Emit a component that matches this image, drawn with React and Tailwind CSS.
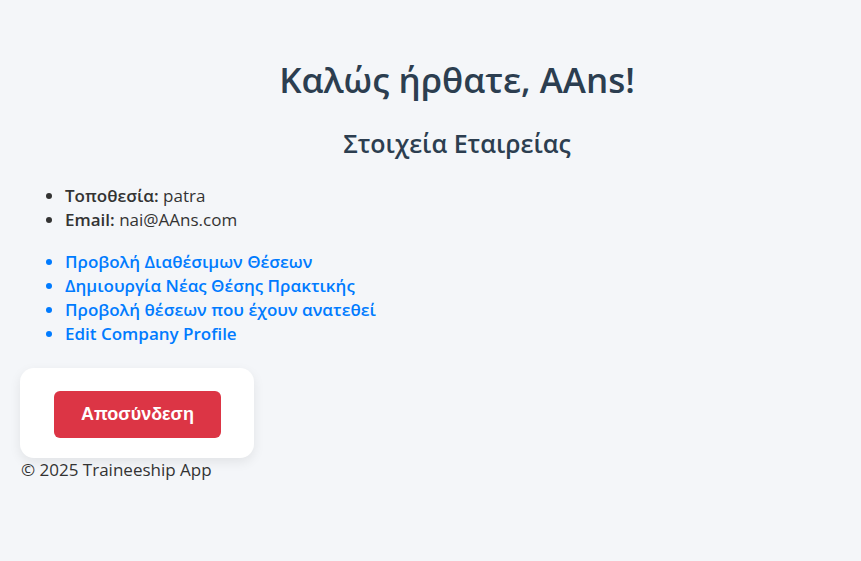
export default function App() {
  return (
    <div className="min-h-[561px] bg-[#f4f6f9] px-5 pt-[55px] text-[#333] font-['Open_Sans',sans-serif] text-[17px]">
      <h1 className="pl-[53px] text-center text-[35px] leading-[50px] font-semibold text-[#2c3e50]">
        Καλώς ήρθατε, AAns!
      </h1>
      <h2 className="mt-[20px] pl-[53px] text-center text-[25px] leading-[36px] font-semibold text-[#2c3e50]">
        Στοιχεία Εταιρείας
      </h2>
      <ul className="mt-[23px] list-disc pl-[45px] leading-[24px]">
        <li>
          <strong className="font-semibold">Τοποθεσία:</strong> patra
        </li>
        <li>
          <strong className="font-semibold">Email:</strong> nai@AAns.com
        </li>
      </ul>
      <ul className="mt-[18px] list-disc pl-[45px] leading-[24px] font-semibold text-[#007bff]">
        <li>
          <a href="#">Προβολή Διαθέσιμων Θέσεων</a>
        </li>
        <li>
          <a href="#">Δημιουργία Νέας Θέσης Πρακτικής</a>
        </li>
        <li>
          <a href="#">Προβολή θέσεων που έχουν ανατεθεί</a>
        </li>
        <li>
          <a href="#">Edit Company Profile</a>
        </li>
      </ul>
      <div className="mt-[22px] w-[234px] rounded-[14px] bg-white px-[34px] pt-[23px] pb-[20px] shadow-[0_4px_12px_rgba(0,0,0,0.08)]">
        <button className="h-[47px] w-[167px] rounded-[6px] bg-[#dc3545] text-[18px] font-bold text-white font-['Liberation_Sans',sans-serif]">
          Αποσύνδεση
        </button>
      </div>
      <footer className="pl-[1px] text-[17px] leading-[24px] text-[#333]">
        © 2025 Traineeship App
      </footer>
    </div>
  );
}
